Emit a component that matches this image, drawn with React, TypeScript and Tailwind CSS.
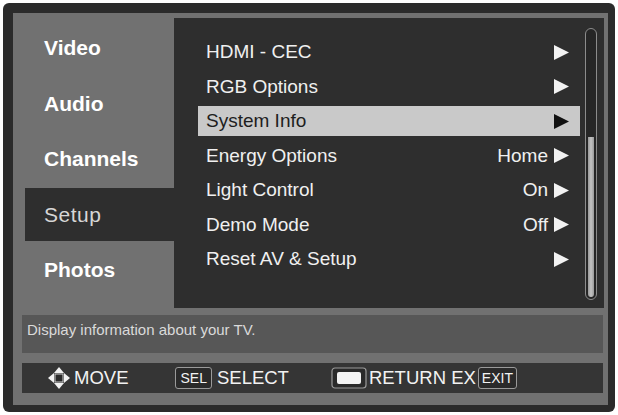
const tabs = ["Video", "Audio", "Channels", "Setup", "Photos"];

const items: { label: string; value?: string }[] = [
  { label: "HDMI - CEC" },
  { label: "RGB Options" },
  { label: "System Info" },
  { label: "Energy Options", value: "Home" },
  { label: "Light Control", value: "On" },
  { label: "Demo Mode", value: "Off" },
  { label: "Reset AV & Setup" },
];

const Arrow = ({ dark }: { dark?: boolean }) => (
  <svg width="15" height="15" viewBox="0 0 15 15" className="shrink-0">
    <polygon points="0,0 15,7.5 0,15" fill={dark ? "#111111" : "#f2f2f2"} />
  </svg>
);

const MoveIcon = () => (
  <svg width="24" height="24" viewBox="0 0 24 24" className="shrink-0">
    <polygon points="12,1 7,7 17,7" fill="#f2f2f2" />
    <polygon points="12,23 7,17 17,17" fill="#f2f2f2" />
    <polygon points="1,12 7,7 7,17" fill="#f2f2f2" />
    <polygon points="23,12 17,7 17,17" fill="#f2f2f2" />
    <rect x="8" y="8" width="8" height="8" fill="#2a2a2a" stroke="#cfcfcf" strokeWidth="1" />
  </svg>
);

const ReturnIcon = () => (
  <svg width="36" height="22" viewBox="0 0 36 22" className="shrink-0">
    <rect x="1" y="1" width="34" height="20" rx="3" fill="#2a2a2a" stroke="#9a9a9a" strokeWidth="1.2" />
    <rect x="6" y="5" width="24" height="12" rx="2" fill="#f4f4f4" />
  </svg>
);

export default function App() {
  return (
    <div
      className="w-[618px] h-[415px] bg-white p-[3px]"
      style={{ fontFamily: '"Liberation Sans", Arial, sans-serif' }}
    >
      <div className="w-[612px] h-[409px] rounded-[6px] bg-[#2b2b2b] pl-[10px] pt-[10px] pr-[7px] pb-[7px]">
        <div className="h-[392px] bg-[#717171] flex flex-col">
          {/* top section */}
          <div className="flex h-[295px]">
            <div className="w-[161px] pl-[12px] pt-[8.5px] flex flex-col gap-[2.5px]">
              {tabs.map((t) =>
                t === "Setup" ? (
                  <div
                    key={t}
                    className="h-[53px] bg-[#2e2e2e] flex items-center pl-[19px] text-[21px] text-[#d6d6d6] tracking-[0.5px]"
                  >
                    {t}
                  </div>
                ) : (
                  <div
                    key={t}
                    className="h-[53px] flex items-center pl-[19px] text-[21px] font-bold text-white"
                  >
                    {t}
                  </div>
                )
              )}
            </div>
            <div className="mt-[5px] mr-[4px] w-[430px] h-[290px] bg-[#2e2e2e] flex pl-[24px]">
              <div className="w-[382px] pt-[17px] flex flex-col">
                {items.map((it) => {
                  const sel = it.label === "System Info";
                  return (
                    <div key={it.label} className="h-[34.5px] flex items-center">
                      <div
                        className={`w-full h-[30px] flex items-center pl-[8px] pr-[11px] text-[19px] ${
                          sel ? "bg-[#c9c9c9] text-[#1e1e1e]" : "text-[#f0f0f0]"
                        }`}
                      >
                        <span className="flex-1">{it.label}</span>
                        {it.value && <span className="mr-[6px]">{it.value}</span>}
                        <Arrow dark={sel} />
                      </div>
                    </div>
                  );
                })}
              </div>
              <div className="ml-[5px] mt-[10px] w-[12px] h-[272px] rounded-full border border-[#8c8c8c] bg-[#262626] flex flex-col justify-end p-[2px]">
                <div className="h-[160px] rounded-b-full bg-gradient-to-r from-[#9a9a9a] via-[#c4c4c4] to-[#9a9a9a]" />
              </div>
            </div>
          </div>

          {/* description */}
          <div className="mt-[7px] ml-[9px] mr-[5px] h-[38px] bg-[#575757] pl-[5px] pt-[4px] text-[15px] text-[#dadada]">
            Display information about your TV.
          </div>

          {/* bottom bar */}
          <div className="mt-[10px] ml-[9px] mr-[5px] h-[30px] bg-[#353535] flex items-center pl-[25px] text-[18.5px] text-[#f2f2f2]">
            <MoveIcon />
            <span className="ml-[3px]">MOVE</span>
            <span className="ml-[47px] h-[22px] px-[4px] rounded-[3px] border border-[#9a9a9a] bg-[#2a2a2a] text-[14px] leading-[20px]">
              SEL
            </span>
            <span className="ml-[5px]">SELECT</span>
            <span className="ml-[42px] flex">
              <ReturnIcon />
            </span>
            <span className="ml-[2px]">RETURN EX</span>
            <span className="ml-[2px] h-[22px] px-[3px] rounded-[3px] border border-[#9a9a9a] bg-[#2a2a2a] text-[14px] leading-[20px]">
              EXIT
            </span>
          </div>
        </div>
      </div>
    </div>
  );
}
